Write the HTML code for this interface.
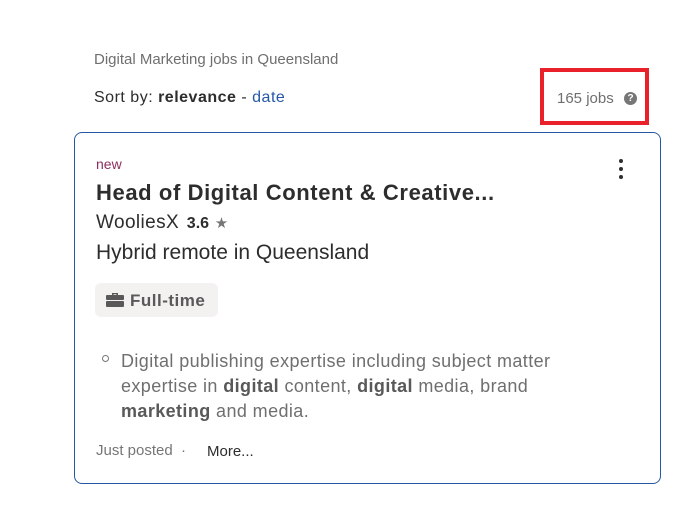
<!DOCTYPE html>
<html><head><style>
body{margin:0;width:689px;height:506px;background:#fff;font-family:"Liberation Sans",sans-serif;position:relative;overflow:hidden;color:#2d2d2d}
.a{position:absolute;white-space:nowrap}
</style></head><body>
<div class="a" style="left:94px;top:51px;font-size:15px;color:#6f6f6f">Digital Marketing jobs in Queensland</div>
<div class="a" style="left:94px;top:89px;font-size:16px;letter-spacing:.5px;color:#2d2d2d">Sort by: <b>relevance</b> - <span style="color:#2557a7">date</span></div>
<div class="a" style="left:540px;top:68px;width:109px;height:57px;border:4px solid #e8212b;box-sizing:border-box"></div>
<div class="a" style="left:557px;top:90px;font-size:15px;color:#6f6f6f">165 jobs</div>
<div class="a" style="left:624px;top:92px;width:13px;height:13px;border-radius:50%;background:#767676;color:#fff;font-size:10px;font-weight:bold;text-align:center;line-height:13px">?</div>
<div class="a" style="left:74px;top:132px;width:587px;height:352px;border:1px solid #2557a7;border-radius:8px;box-sizing:border-box"></div>
<div class="a" style="left:96px;top:156px;font-size:14px;color:#8c2f5e">new</div>
<div class="a" style="left:619px;top:159px;width:4px;height:4px;border-radius:50%;background:#2d2d2d;box-shadow:0 8px 0 #2d2d2d,0 16px 0 #2d2d2d"></div>
<div class="a" style="left:96px;top:180px;font-size:22px;letter-spacing:.6px;font-weight:bold;color:#2d2d2d">Head of Digital Content &amp; Creative...</div>
<div class="a" style="left:96px;top:212px;font-size:19px;letter-spacing:.4px">WooliesX <b style="font-size:16px;margin-left:2px;letter-spacing:0">3.6</b> <span style="color:#767676;font-size:15px">★</span></div>
<div class="a" style="left:96px;top:241px;font-size:21px">Hybrid remote in Queensland</div>
<div class="a" style="left:95px;top:283px;width:123px;height:34px;background:#f3f2f1;border-radius:6px"></div>
<svg class="a" style="left:106px;top:292px" width="18" height="15" viewBox="0 0 18 15"><path d="M6 3V1h6v2h-1.5V2.3h-3V3z" fill="#595959"/><rect x="0" y="3" width="18" height="5" rx="1" fill="#595959"/><rect x="0" y="9" width="18" height="6" rx="1" fill="#595959"/></svg>
<div class="a" style="left:130px;top:291px;font-size:17px;letter-spacing:.5px;font-weight:bold;color:#595959">Full-time</div>
<div class="a" style="left:102px;top:355px;width:5px;height:5px;border:1px solid #767676;border-radius:50%"></div>
<div class="a" style="left:121px;top:349px;font-size:18px;letter-spacing:.4px;color:#6f6f6f;line-height:25px;white-space:normal;width:445px">Digital publishing expertise including subject matter expertise in <b style="color:#595959">digital</b> content, <b style="color:#595959">digital</b> media, brand <b style="color:#595959">marketing</b> and media.</div>
<div class="a" style="left:96px;top:442px;font-size:15px;color:#767676">Just posted &nbsp;·</div>
<div class="a" style="left:207px;top:443px;font-size:15px;color:#2d2d2d">More...</div>
</body></html>
